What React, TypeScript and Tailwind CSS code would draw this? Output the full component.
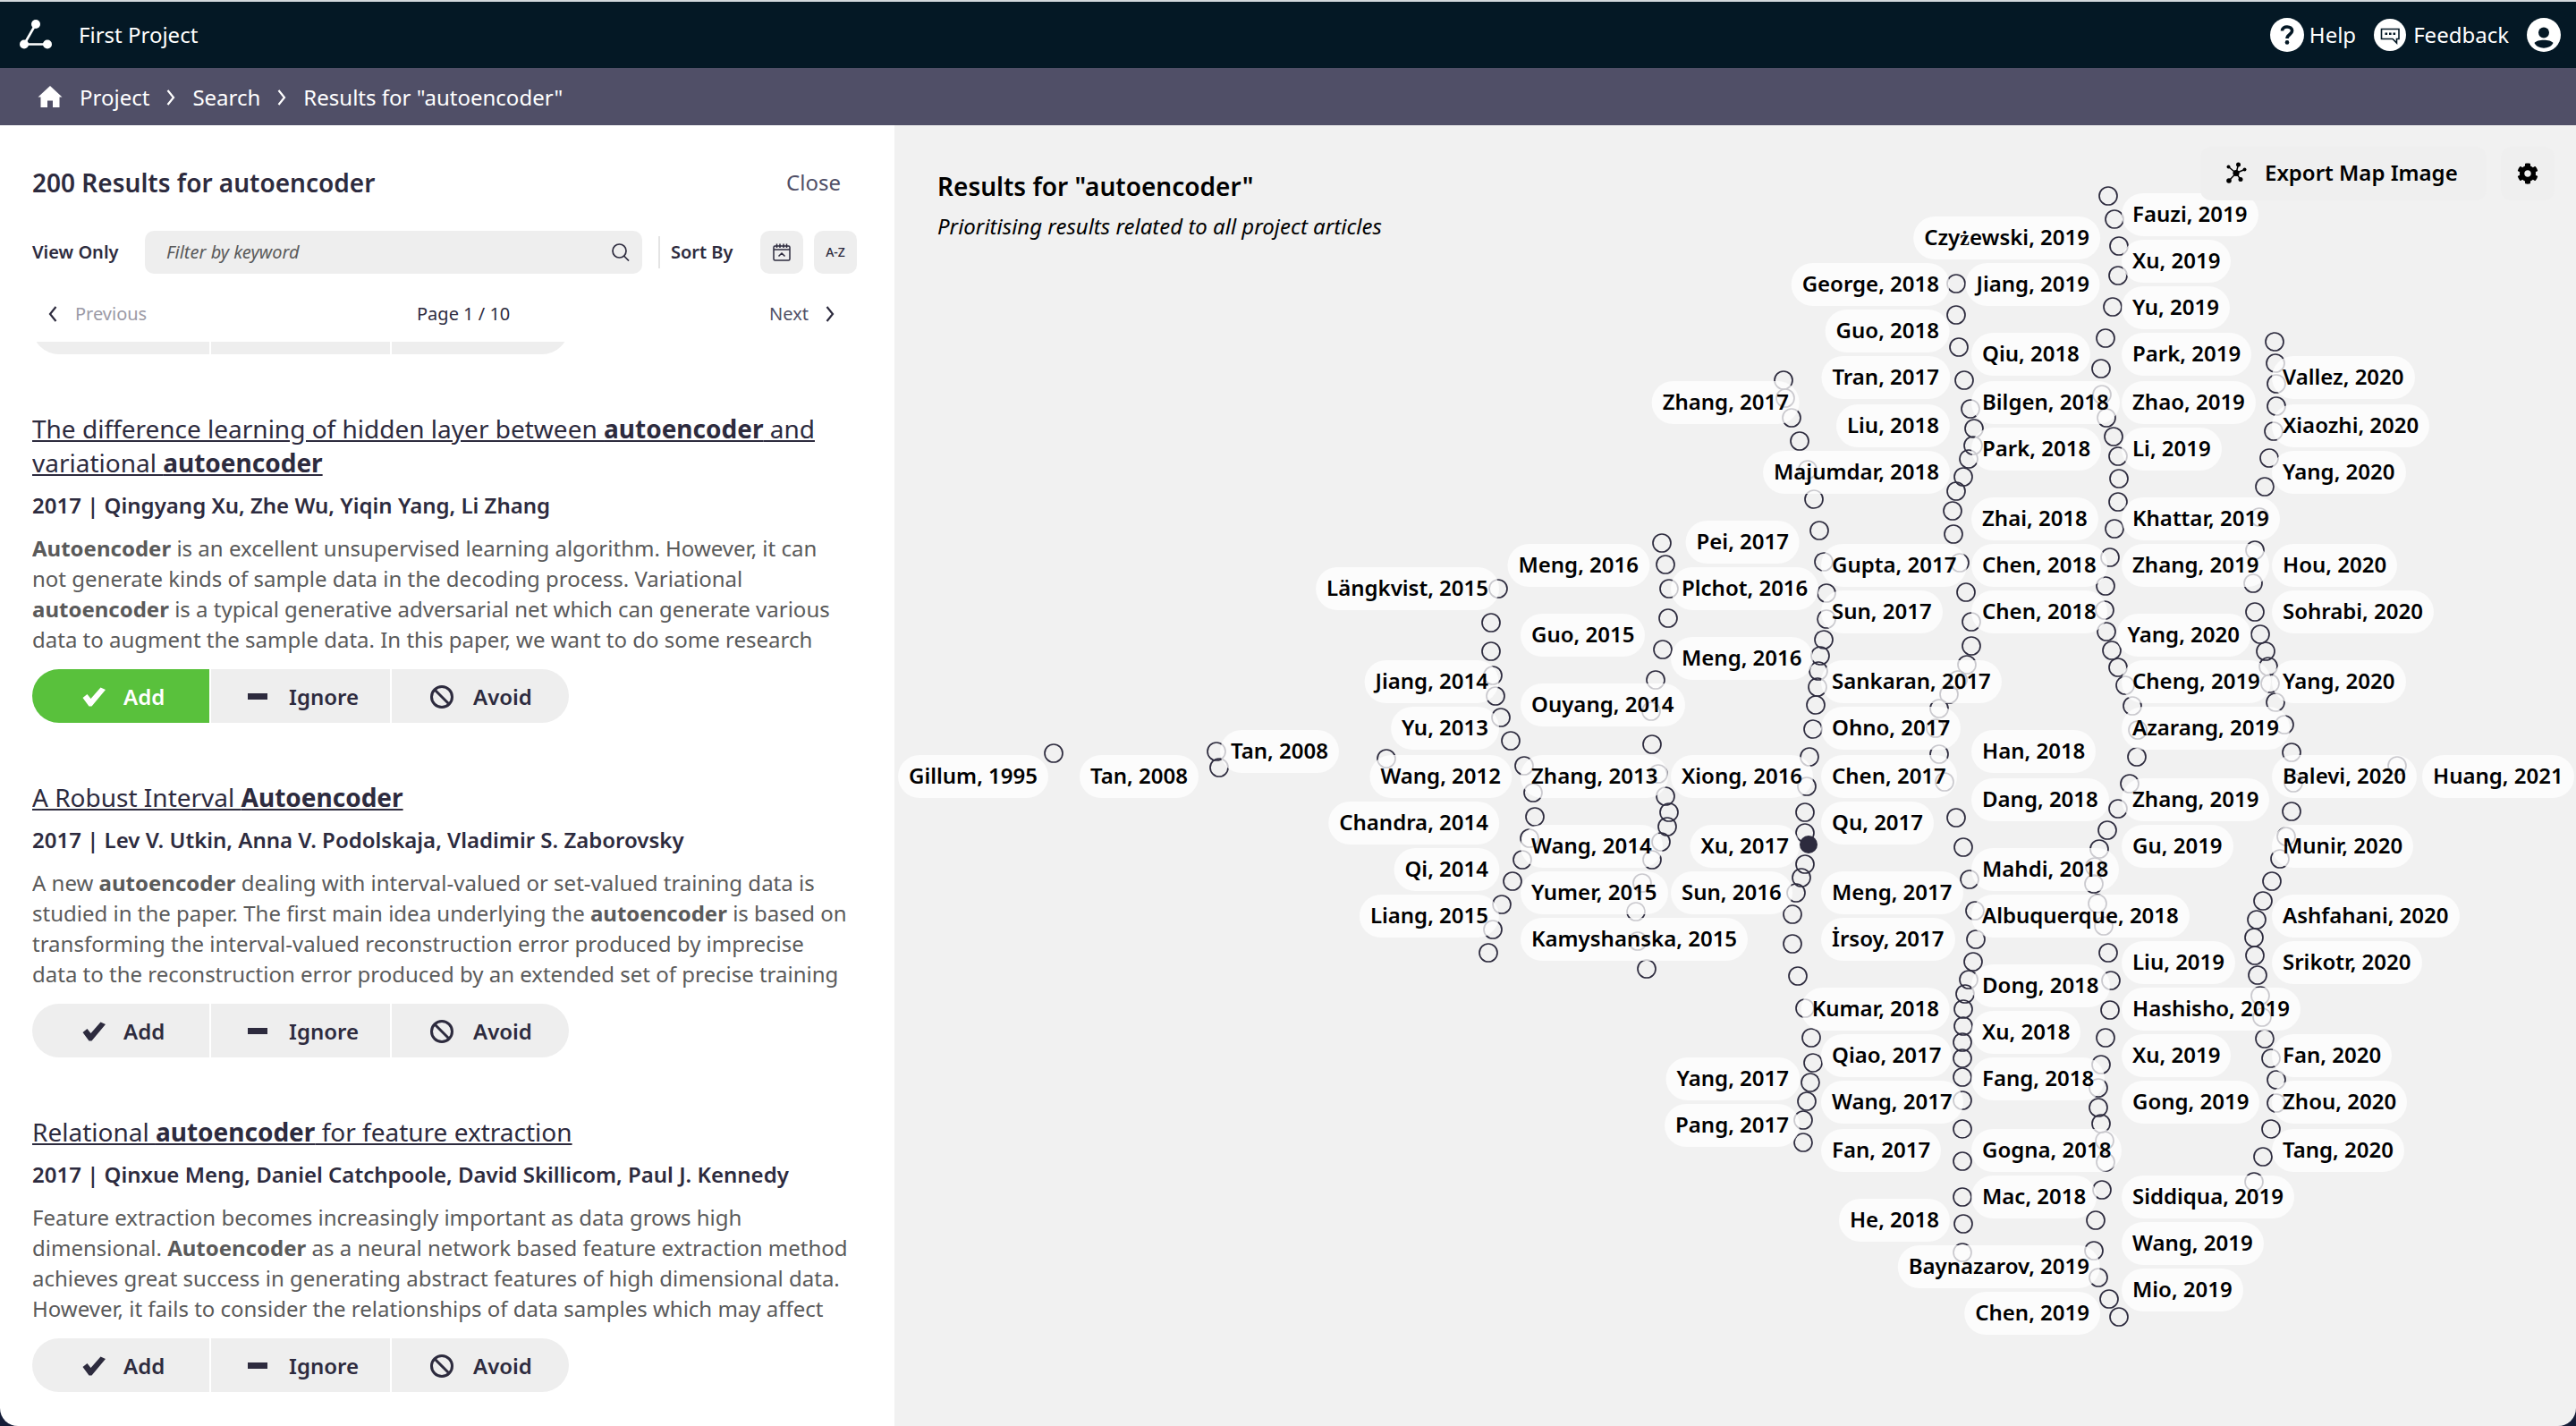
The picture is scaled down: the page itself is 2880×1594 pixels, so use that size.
import React from "react";
import { FaCog } from "react-icons/fa";

type Choice = "add" | null;

type Article = {
  title: React.ReactNode;
  byline: string;
  summary: React.ReactNode;
  choice: Choice;
};

const articles: Article[] = [
  {
    title: (
      <>
        The difference learning of hidden layer between <b>autoencoder</b> and variational <b>autoencoder</b>
      </>
    ),
    byline: "2017 | Qingyang Xu, Zhe Wu, Yiqin Yang, Li Zhang",
    summary: (
      <>
        <b>Autoencoder</b> is an excellent unsupervised learning algorithm. However, it can not generate kinds of
        sample data in the decoding process. Variational <b>autoencoder</b> is a typical generative adversarial net
        which can generate various data to augment the sample data. In this paper, we want to do some research
      </>
    ),
    choice: "add",
  },
  {
    title: (
      <>
        A Robust Interval <b>Autoencoder</b>
      </>
    ),
    byline: "2017 | Lev V. Utkin, Anna V. Podolskaja, Vladimir S. Zaborovsky",
    summary: (
      <>
        A new <b>autoencoder</b> dealing with interval-valued or set-valued training data is studied in the paper. The
        first main idea underlying the <b>autoencoder</b> is based on transforming the interval-valued reconstruction
        error produced by imprecise data to the reconstruction error produced by an extended set of precise training
      </>
    ),
    choice: null,
  },
  {
    title: (
      <>
        Relational <b>autoencoder</b> for feature extraction
      </>
    ),
    byline: "2017 | Qinxue Meng, Daniel Catchpoole, David Skillicom, Paul J. Kennedy",
    summary: (
      <>
        Feature extraction becomes increasingly important as data grows high dimensional. <b>Autoencoder</b> as a
        neural network based feature extraction method achieves great success in generating abstract features of high
        dimensional data. However, it fails to consider the relationships of data samples which may affect
      </>
    ),
    choice: null,
  },
];

// Centres of the article nodes on the map canvas.
const nodes: [number, number][] = [
  [177, 702], [359, 700], [362, 718], [549, 708],
  [674, 518], [666, 556], [666, 588], [668, 615], [671, 638], [677, 662], [688, 688], [703, 716], [713, 746],
  [715, 773], [709, 797], [701, 821], [690, 845], [678, 871], [668, 899], [663, 925],
  [857, 467], [861, 491], [865, 518], [864, 551], [858, 586], [850, 620], [845, 655], [846, 692], [853, 725],
  [861, 750], [865, 768], [863, 784], [856, 801], [846, 821], [835, 847], [828, 879], [830, 912], [840, 943],
  [993, 285], [995, 305], [1002, 327], [1011, 353], [1020, 385], [1027, 418], [1033, 453], [1038, 488],
  [1041, 523], [1041, 552], [1038, 575], [1034, 593], [1032, 610], [1031, 628], [1029, 648], [1026, 675],
  [1022, 706], [1019, 739], [1017, 768], [1017, 791], [1017, 826], [1013, 841], [1007, 858], [1003, 882],
  [1003, 915], [1009, 951], [1017, 987], [1024, 1020], [1026, 1048], [1023, 1070], [1019, 1091], [1015, 1112],
  [1015, 1137],
  [1186, 177], [1186, 212], [1189, 248], [1195, 285], [1202, 317], [1206, 339], [1205, 358], [1200, 373],
  [1194, 393], [1186, 409], [1182, 431], [1183, 457], [1190, 489], [1197, 522], [1203, 555], [1203, 582],
  [1198, 603], [1188, 620], [1178, 636], [1167, 652], [1163, 674], [1167, 703], [1173, 734], [1186, 774],
  [1194, 807], [1201, 843], [1207, 878], [1208, 910], [1205, 935], [1200, 955], [1196, 971], [1194, 988],
  [1194, 1007], [1193, 1025], [1193, 1043], [1193, 1064], [1193, 1090], [1193, 1122], [1193, 1158], [1193, 1198],
  [1194, 1228], [1193, 1260],
  [1356, 79], [1363, 105], [1368, 135], [1367, 168], [1361, 203], [1353, 238], [1348, 272], [1349, 301],
  [1354, 327], [1362, 348], [1367, 370], [1368, 395], [1367, 421], [1363, 451], [1358, 483], [1353, 515],
  [1352, 542], [1354, 566], [1360, 587], [1367, 606], [1375, 626], [1383, 649], [1389, 676], [1388, 706],
  [1380, 736], [1367, 764], [1355, 788], [1346, 809], [1341, 829], [1340, 848], [1344, 870], [1351, 895],
  [1356, 925], [1359, 956], [1358, 989], [1353, 1020], [1348, 1050], [1345, 1076], [1345, 1098], [1348, 1116],
  [1352, 1135], [1353, 1159], [1349, 1190], [1342, 1224], [1340, 1258], [1345, 1288], [1357, 1312], [1368, 1332],
  [1542, 242], [1543, 266], [1544, 289], [1544, 314], [1541, 342], [1536, 372], [1531, 404], [1525, 438],
  [1520, 475], [1518, 512], [1520, 544], [1526, 569], [1532, 588], [1535, 605], [1537, 624], [1543, 645],
  [1553, 670], [1561, 701], [1679, 716], [1563, 735], [1561, 767], [1555, 795], [1548, 820], [1539, 845],
  [1529, 867], [1522, 888], [1519, 908], [1520, 928], [1523, 950], [1526, 973], [1528, 997], [1531, 1021],
  [1538, 1043], [1544, 1067], [1544, 1093], [1538, 1122], [1529, 1153], [1519, 1181],
];

const selectedNode: [number, number] = [1021, 804];

type Label = { text: string; x: number; y: number; end?: boolean };

// "end" labels grow leftwards from x, the others rightwards.
const labels: Label[] = [
  { text: "Gillum, 1995", x: 1004, y: 844 },
  { text: "Tan, 2008", x: 1207, y: 844 },
  { text: "Tan, 2008", x: 1364, y: 816 },
  { text: "Längkvist, 2015", x: 1676, y: 634, end: true },
  { text: "Jiang, 2014", x: 1676, y: 738, end: true },
  { text: "Yu, 2013", x: 1676, y: 790, end: true },
  { text: "Wang, 2012", x: 1690, y: 844, end: true },
  { text: "Chandra, 2014", x: 1676, y: 896, end: true },
  { text: "Qi, 2014", x: 1676, y: 948, end: true },
  { text: "Liang, 2015", x: 1676, y: 1000, end: true },
  { text: "Meng, 2016", x: 1844, y: 608, end: true },
  { text: "Guo, 2015", x: 1700, y: 686 },
  { text: "Ouyang, 2014", x: 1700, y: 764 },
  { text: "Zhang, 2013", x: 1700, y: 844 },
  { text: "Wang, 2014", x: 1700, y: 922 },
  { text: "Yumer, 2015", x: 1700, y: 974 },
  { text: "Kamyshanska, 2015", x: 1700, y: 1026 },
  { text: "Plchot, 2016", x: 1868, y: 634 },
  { text: "Meng, 2016", x: 1868, y: 712 },
  { text: "Xiong, 2016", x: 1868, y: 844 },
  { text: "Sun, 2016", x: 1868, y: 974 },
  { text: "Zhang, 2017", x: 2012, y: 426, end: true },
  { text: "Pei, 2017", x: 2012, y: 582, end: true },
  { text: "Xu, 2017", x: 2012, y: 922, end: true },
  { text: "Yang, 2017", x: 2012, y: 1182, end: true },
  { text: "Pang, 2017", x: 2012, y: 1234, end: true },
  { text: "Gupta, 2017", x: 2036, y: 608 },
  { text: "Sun, 2017", x: 2036, y: 660 },
  { text: "Sankaran, 2017", x: 2036, y: 738 },
  { text: "Ohno, 2017", x: 2036, y: 790 },
  { text: "Chen, 2017", x: 2036, y: 844 },
  { text: "Qu, 2017", x: 2036, y: 896 },
  { text: "Meng, 2017", x: 2036, y: 974 },
  { text: "İrsoy, 2017", x: 2036, y: 1026 },
  { text: "Qiao, 2017", x: 2036, y: 1156 },
  { text: "Wang, 2017", x: 2036, y: 1208 },
  { text: "Fan, 2017", x: 2036, y: 1262 },
  { text: "George, 2018", x: 2180, y: 294, end: true },
  { text: "Guo, 2018", x: 2180, y: 346, end: true },
  { text: "Tran, 2017", x: 2180, y: 398, end: true },
  { text: "Liu, 2018", x: 2180, y: 452, end: true },
  { text: "Majumdar, 2018", x: 2180, y: 504, end: true },
  { text: "Kumar, 2018", x: 2180, y: 1104, end: true },
  { text: "He, 2018", x: 2180, y: 1340, end: true },
  { text: "Qiu, 2018", x: 2204, y: 372 },
  { text: "Bilgen, 2018", x: 2204, y: 426 },
  { text: "Park, 2018", x: 2204, y: 478 },
  { text: "Zhai, 2018", x: 2204, y: 556 },
  { text: "Chen, 2018", x: 2204, y: 608 },
  { text: "Chen, 2018", x: 2204, y: 660 },
  { text: "Han, 2018", x: 2204, y: 816 },
  { text: "Dang, 2018", x: 2204, y: 870 },
  { text: "Mahdi, 2018", x: 2204, y: 948 },
  { text: "Albuquerque, 2018", x: 2204, y: 1000 },
  { text: "Dong, 2018", x: 2204, y: 1078 },
  { text: "Xu, 2018", x: 2204, y: 1130 },
  { text: "Fang, 2018", x: 2204, y: 1182 },
  { text: "Gogna, 2018", x: 2204, y: 1262 },
  { text: "Mac, 2018", x: 2204, y: 1314 },
  { text: "Czyżewski, 2019", x: 2348, y: 242, end: true },
  { text: "Jiang, 2019", x: 2348, y: 294, end: true },
  { text: "Baynazarov, 2019", x: 2348, y: 1392, end: true },
  { text: "Chen, 2019", x: 2348, y: 1444, end: true },
  { text: "Fauzi, 2019", x: 2372, y: 216 },
  { text: "Xu, 2019", x: 2372, y: 268 },
  { text: "Yu, 2019", x: 2372, y: 320 },
  { text: "Park, 2019", x: 2372, y: 372 },
  { text: "Zhao, 2019", x: 2372, y: 426 },
  { text: "Li, 2019", x: 2372, y: 478 },
  { text: "Khattar, 2019", x: 2372, y: 556 },
  { text: "Zhang, 2019", x: 2372, y: 608 },
  { text: "Yang, 2020", x: 2516, y: 686, end: true },
  { text: "Cheng, 2019", x: 2372, y: 738 },
  { text: "Azarang, 2019", x: 2372, y: 790 },
  { text: "Zhang, 2019", x: 2372, y: 870 },
  { text: "Gu, 2019", x: 2372, y: 922 },
  { text: "Liu, 2019", x: 2372, y: 1052 },
  { text: "Hashisho, 2019", x: 2372, y: 1104 },
  { text: "Xu, 2019", x: 2372, y: 1156 },
  { text: "Gong, 2019", x: 2372, y: 1208 },
  { text: "Siddiqua, 2019", x: 2372, y: 1314 },
  { text: "Wang, 2019", x: 2372, y: 1366 },
  { text: "Mio, 2019", x: 2372, y: 1418 },
  { text: "Vallez, 2020", x: 2540, y: 398 },
  { text: "Xiaozhi, 2020", x: 2540, y: 452 },
  { text: "Yang, 2020", x: 2540, y: 504 },
  { text: "Hou, 2020", x: 2540, y: 608 },
  { text: "Sohrabi, 2020", x: 2540, y: 660 },
  { text: "Yang, 2020", x: 2540, y: 738 },
  { text: "Balevi, 2020", x: 2540, y: 844 },
  { text: "Munir, 2020", x: 2540, y: 922 },
  { text: "Ashfahani, 2020", x: 2540, y: 1000 },
  { text: "Srikotr, 2020", x: 2540, y: 1052 },
  { text: "Fan, 2020", x: 2540, y: 1156 },
  { text: "Zhou, 2020", x: 2540, y: 1208 },
  { text: "Tang, 2020", x: 2540, y: 1262 },
  { text: "Huang, 2021", x: 2708, y: 844 },
];

// Page position of the map canvas origin.
const ORIGIN = { x: 1000, y: 140 };

function Chevron({ left = false, className }: { left?: boolean; className: string }) {
  return (
    <svg viewBox="0 0 10 18" className={className} fill="none" stroke="currentColor" strokeWidth="2.2" aria-hidden="true">
      <path d={left ? "M8.5 1 L2 9 L8.5 17" : "M1.5 1 L8 9 L1.5 17"} />
    </svg>
  );
}

function CheckIcon() {
  return (
    <svg viewBox="0 0 26 22" className="h-[22px] w-[26px]" fill="currentColor" aria-hidden="true">
      <path d="M0.5 12 L5.500 8 L9.500 13 L20.500 0.500 L26 3 L10.500 21.500 L7.500 21.500 Z" />
    </svg>
  );
}

function MinusIcon() {
  return (
    <svg viewBox="0 0 22 22" className="size-[22px]" fill="currentColor" aria-hidden="true">
      <rect x="0" y="7" width="22" height="7" />
    </svg>
  );
}

function BanIcon() {
  return (
    <svg viewBox="0 0 26 26" className="size-[26px]" fill="none" stroke="currentColor" strokeWidth="3" aria-hidden="true">
      <circle cx="13" cy="13" r="11.500" />
      <path d="M5 5 L21 21" />
    </svg>
  );
}

function TopBar() {
  return (
    <header className="flex h-[76px] shrink-0 items-center border-t-2 border-[#d3d8dc] bg-[#041825] pr-[17px] pl-5 text-2xl text-white">
      <svg viewBox="0 0 40 40" className="size-10" aria-hidden="true">
        <path d="M20 8 L7 30.500 M7 30.500 H33" stroke="#fff" strokeWidth="2.600" fill="none" />
        <circle cx="20" cy="8" r="5" fill="#fff" />
        <circle cx="7" cy="30.500" r="5" fill="#fff" />
        <circle cx="33" cy="30.500" r="5" fill="#fff" />
      </svg>
      <span className="ml-7">First Project</span>
      <nav className="ml-auto flex items-center">
        <a href="#help" className="flex items-center gap-[6px]">
          <svg viewBox="0 0 38 38" className="size-[38px]" aria-hidden="true">
            <circle cx="19" cy="19" r="19" fill="#fff" />
            <path d="M13.5 14.5 C13.5 11.5 16 10 19 10 C22.3 10 24.6 11.8 24.6 14.6 C24.6 18.6 19 18.4 19 23" fill="none" stroke="#041825" strokeWidth="3.6" />
            <circle cx="19" cy="27.4" r="2.3" fill="#041825" />
          </svg>
          Help
        </a>
        <a href="#feedback" className="ml-5 flex items-center gap-2">
          <svg viewBox="0 0 36 36" className="size-9" aria-hidden="true">
            <circle cx="18" cy="18" r="18" fill="#fff" />
            <path d="M8.5 11.5 H28 V22.5 H25.5 V27 L21 22.5 H8.5 Z" fill="none" stroke="#041825" strokeWidth="1.6" />
            <path d="M12.5 15.5 h2.6 v2.6 h-2.6 z M17 15.5 h2.6 v2.6 h-2.6 z M21.5 15.5 h2.6 v2.6 h-2.6 z" fill="#041825" />
          </svg>
          Feedback
        </a>
        <button type="button" aria-label="Account" className="ml-5">
          <svg viewBox="0 0 38 38" className="size-[38px]" aria-hidden="true">
            <circle cx="19" cy="19" r="19" fill="#fff" />
            <circle cx="19" cy="16.5" r="6" fill="#041825" />
            <path d="M8.5 28 C11.5 23.5 26.5 23.5 29.500 28 C26 35.500 12 35.500 8.500 28 Z" fill="#041825" />
          </svg>
        </button>
      </nav>
    </header>
  );
}

function Breadcrumb() {
  return (
    <nav aria-label="Breadcrumb" className="flex h-16 shrink-0 items-center bg-[#504f67] pt-0.5 pl-[42px] text-2xl text-white">
      <a href="#home" aria-label="Home" className="mr-[19px] pb-0.5">
        <svg viewBox="0 0 28 26" className="h-[26px] w-7" fill="#fff" aria-hidden="true">
          <path d="M14 1 L27.500 13.500 H24.500 V25 H17 V17.500 H11 V25 H3.500 V13.500 H0.500 Z" />
        </svg>
      </a>
      <a href="#project">Project</a>
      <Chevron className="mx-[19px] h-[18px] w-[10px]" />
      <a href="#search">Search</a>
      <Chevron className="mx-[19px] h-[18px] w-[10px]" />
      <span aria-current="page">Results for "autoencoder"</span>
    </nav>
  );
}

function ChoiceButtons({ choice }: { choice: Choice }) {
  const item = "flex h-[60px] items-center pt-0.5 text-2xl font-semibold";
  return (
    <div className="flex w-[600px] shrink-0 gap-0.5 overflow-hidden rounded-full">
      <button
        type="button"
        className={
          item + " w-[198px] gap-5 pl-[56px] " + (choice === "add" ? "bg-[#59c13c] text-white" : "bg-[#eeeeee]")
        }
      >
        <CheckIcon />
        Add
      </button>
      <button type="button" className={item + " w-[200px] gap-6 bg-[#eeeeee] pl-[41px]"}>
        <MinusIcon />
        Ignore
      </button>
      <button type="button" className={item + " w-[198px] gap-[22px] bg-[#eeeeee] pl-[43px]"}>
        <BanIcon />
        Avoid
      </button>
    </div>
  );
}

function ResultsPanel() {
  return (
    <aside className="flex w-[1000px] shrink-0 flex-col bg-white pr-[42px] pl-9 text-[#2d2b3e]">
      <div className="flex items-center justify-between pt-[45px] pr-[18px]">
        <h1 className="text-[28px] leading-[38px] font-semibold">200 Results for autoencoder</h1>
        <button type="button" className="text-2xl text-[#504f67]">Close</button>
      </div>

      <div className="mt-[35px] flex items-center text-xl font-semibold">
        <label htmlFor="keyword" className="w-[126px]">View Only</label>
        <div className="flex h-12 min-w-0 flex-1 items-center rounded-[10px] bg-[#eeeeee] pr-[14px] pl-6">
          <input
            id="keyword"
            type="text"
            placeholder="Filter by keyword"
            className="min-w-0 flex-1 bg-transparent font-normal italic outline-none placeholder:text-[#5a5a5a]"
          />
          <svg viewBox="0 0 20 20" className="size-5" fill="none" stroke="currentColor" strokeWidth="1.700" aria-hidden="true">
            <circle cx="8.500" cy="8.500" r="7.500" />
            <path d="M13.500 14 L19 19.500" />
          </svg>
        </div>
        <div className="mr-3 ml-[18px] h-9 w-0.5 bg-[#e4e4e4]" />
        <span className="w-[100px]">Sort By</span>
        <button type="button" aria-label="Sort by date" className="flex size-12 items-center justify-center rounded-[10px] bg-[#eeeeee]">
          <svg viewBox="0 0 20 20" className="size-5" fill="none" stroke="currentColor" strokeWidth="1.500" aria-hidden="true">
            <rect x="1" y="3" width="18" height="16" rx="1.500" />
            <path d="M1 7 H19 M4.500 0.500 V5 M8 0.500 V5 M12 0.500 V5 M15.500 0.500 V5 M6.500 14.500 L10 11 L13.500 14.500" />
          </svg>
        </button>
        <button type="button" aria-label="Sort alphabetically" className="ml-3 size-12 rounded-[10px] bg-[#eeeeee] text-sm font-medium">
          A-Z
        </button>
      </div>

      <div className="mt-[31px] flex h-7 items-center justify-between pr-[25px] pl-[18px] text-xl">
        <button type="button" className="flex items-center gap-5 text-[#9b9aa6]" disabled>
          <Chevron left className="h-[18px] w-[10px] text-[#2d2b3e]" />
          Previous
        </button>
        <span className="pl-3">Page 1 / 10</span>
        <button type="button" className="flex items-center gap-[19px] text-[#504f67]">
          Next
          <Chevron className="h-[18px] w-[10px] text-[#2d2b3e]" />
        </button>
      </div>

      {/* The list is scrolled to its end, so it is anchored at the bottom and clipped at the top. */}
      <div className="mt-[17px] flex min-h-0 flex-1 flex-col justify-end overflow-hidden pb-[38px]">
        <ChoiceButtons choice={null} />
        {articles.map((article) => (
          <article key={article.byline} className="mt-16">
            <h2 className="text-[28px] leading-[38px]">
              <a href="#article" className="underline">{article.title}</a>
            </h2>
            <p className="mt-3 text-2xl leading-[34px] font-semibold">{article.byline}</p>
            <p className="mt-3.5 mb-4 pr-1.5 text-2xl leading-[34px] text-[#5a5a5a]">{article.summary}</p>
            <ChoiceButtons choice={article.choice} />
          </article>
        ))}
      </div>
    </aside>
  );
}

function MapLabel({ label }: { label: Label }) {
  const x = label.x - ORIGIN.x;
  const parts = label.text.split("ż");
  return (
    <div
      className={
        "absolute h-12 rounded-full bg-white/75 px-3 text-2xl leading-[46px] font-semibold whitespace-nowrap text-black" +
        (label.end ? " -translate-x-full" : "")
      }
      style={{ left: x, top: label.y - ORIGIN.y }}
    >
      {parts[0]}
      {parts.length > 1 && <span className="font-['Liberation_Serif',serif]">ż</span>}
      {parts[1]}
    </div>
  );
}

function MapPanel() {
  return (
    <main className="relative min-w-0 flex-1 overflow-hidden bg-[#f1f1f1] text-black">
      <svg className="absolute inset-0 size-full" aria-hidden="true">
        <g transform="translate(1 0)" fill="none" stroke="#2d2b3e" strokeWidth="1.700">
          {nodes.map(([x, y]) => (
            <circle key={x + "-" + y} cx={x} cy={y} r="10" />
          ))}
        </g>
      </svg>
      {labels.map((label, i) => (
        <MapLabel key={i} label={label} />
      ))}
      <svg className="absolute inset-0 size-full" aria-hidden="true">
        <circle cx={selectedNode[0] + 1} cy={selectedNode[1]} r="10" fill="#2d2b3e" />
      </svg>

      <div className="relative flex items-start justify-between pt-6 pr-6 pl-12">
        <div className="pt-[25px]">
          <h2 className="text-[28px] leading-[38px] font-semibold">Results for "autoencoder"</h2>
          <p className="mt-[9px] text-2xl leading-[34px] italic">Prioritising results related to all project articles</p>
        </div>
        <div className="flex gap-4">
          <button type="button" className="flex h-[60px] w-[320px] items-center rounded-xl bg-[#efefef] pb-0.5 pl-7 text-2xl font-semibold">
            <svg viewBox="0 0 24 24" className="mr-5 size-6" aria-hidden="true">
              <path d="M12 12.500 L3.500 5.500 M12 12.500 L14.500 3 M12 12.500 L21.500 8.500 M12 12.500 L17 19.500 M12 12.500 L4 21" stroke="#000" strokeWidth="1.500" />
              <circle cx="12" cy="12.500" r="3.600" />
              <circle cx="3.500" cy="5.500" r="2" />
              <circle cx="14.500" cy="3" r="2.500" />
              <circle cx="21.500" cy="8.500" r="2" />
              <circle cx="17" cy="19.500" r="2.500" />
              <circle cx="4" cy="21" r="2.800" />
            </svg>
            Export Map Image
          </button>
          <button type="button" aria-label="Map settings" className="flex size-[60px] items-center justify-center rounded-xl bg-[#efefef]">
            <FaCog className="size-6" />
          </button>
        </div>
      </div>
    </main>
  );
}

export default function App() {
  return (
    <div className="h-screen bg-[#151d38] font-['Noto_Sans',sans-serif]">
      <div className="flex h-full flex-col overflow-hidden rounded-b-[20px]">
        <TopBar />
        <Breadcrumb />
        <div className="flex min-h-0 flex-1">
          <ResultsPanel />
          <MapPanel />
        </div>
      </div>
    </div>
  );
}
